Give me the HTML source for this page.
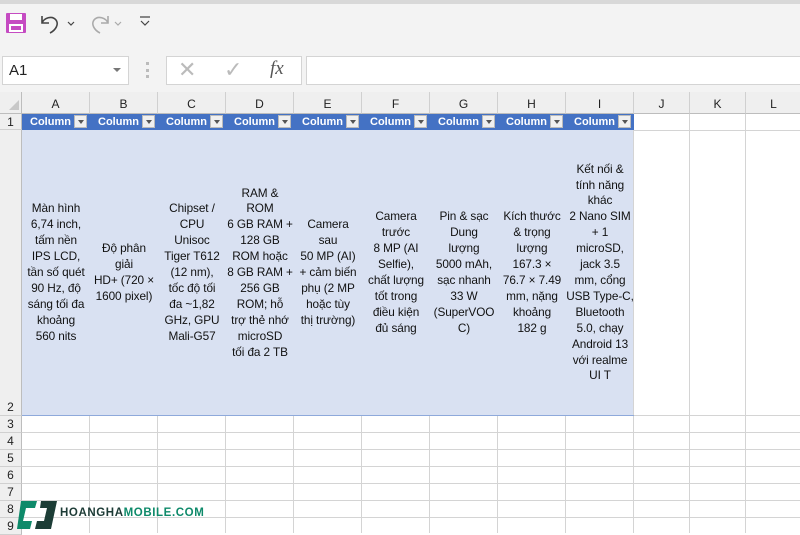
<!DOCTYPE html>
<html><head><meta charset="utf-8"><style>
*{margin:0;padding:0;box-sizing:border-box}
body{width:800px;height:533px;overflow:hidden;background:#fff;font-family:"Liberation Sans",sans-serif;position:relative}
.a{position:absolute}
.top{left:0;top:0;width:800px;height:48px;background:#f3f3f3;border-top:4px solid #d8d8d8}
.fb{left:0;top:48px;width:800px;height:44px;background:#f3f3f3}
.box{background:#fff;border:1px solid #d4d4d4}
.ch{top:92px;height:22px;background:#efefef;border-right:1px solid #d0d0d0;border-bottom:1px solid #bdbdbd;font-size:12px;color:#222;text-align:center;line-height:24px}
.rh{left:0;width:22px;background:#efefef;border-bottom:1px solid #d0d0d0;border-right:1px solid #bdbdbd;font-size:12px;color:#222;text-align:center}
.vl{top:114px;width:1px;height:419px;background:#d4d4d4}
.hl{left:22px;width:778px;height:1px;background:#d4d4d4}
.hd{top:114px;height:16px;background:#4472c4;color:#fff;font-weight:bold;font-size:11px;line-height:16px;padding-left:8px;overflow:hidden;white-space:nowrap}
.dd{top:115px;width:13px;height:13px;background:#f0f0f0;border:1px solid #bbb}
.dd:after{content:"";position:absolute;left:3px;top:4px;border:3px solid transparent;border-top:4px solid #555}
.c{top:130px;height:286px;display:flex;align-items:center;justify-content:center;text-align:center;font-size:11.8px;line-height:15.9px;color:#111;padding:0 1px;white-space:nowrap;letter-spacing:-0.1px}
</style></head><body>
<div class="a top"></div>
<div class="a fb"></div>
<svg class="a" style="left:5px;top:12px" width="22" height="22" viewBox="0 0 22 22"><rect x="1" y="1" width="20" height="20" rx="1" fill="#c54bc2"/><rect x="5" y="2" width="12" height="6" fill="#fff"/><rect x="4" y="12" width="14" height="8" fill="#fff"/><rect x="6" y="14" width="10" height="4" fill="#c54bc2"/></svg>
<svg class="a" style="left:38px;top:12px" width="40" height="24" viewBox="0 0 40 24"><path d="M4 4v7h7M4 11c2-5 10-8 14-3 3 4 0 10-6 13" fill="none" stroke="#444" stroke-width="1.6"/><path d="M30 10l3 3 3-3" fill="none" stroke="#444" stroke-width="1.2"/></svg>
<svg class="a" style="left:86px;top:12px" width="40" height="24" viewBox="0 0 40 24"><path d="M22 4v7h-7M22 11c-2-5-10-8-14-3-3 4 0 10 6 13" fill="none" stroke="#aaa" stroke-width="1.6"/><path d="M29 10l3 3 3-3" fill="none" stroke="#aaa" stroke-width="1.2"/></svg>
<svg class="a" style="left:139px;top:15px" width="12" height="14" viewBox="0 0 12 14"><path d="M1 2h10M2 6l4 4 4-4" fill="none" stroke="#444" stroke-width="1.2"/></svg>
<div class="a box" style="left:2px;top:56px;width:127px;height:29px;font-size:15px;line-height:27px;padding-left:6px;color:#222">A1</div>
<div class="a" style="left:113px;top:68px;border:4px solid transparent;border-top:4px solid #777"></div>
<div class="a" style="left:146px;top:62px;width:3px;height:16px;border-left:3px dotted #bbb"></div>
<div class="a box" style="left:166px;top:56px;width:136px;height:29px"></div>
<div class="a" style="left:178px;top:57px;font-size:22px;color:#bbb">✕</div>
<div class="a" style="left:224px;top:57px;font-size:22px;color:#bbb">✓</div>
<div class="a" style="left:270px;top:58px;font-size:19px;font-style:italic;font-family:'Liberation Serif',serif;color:#555">fx</div>
<div class="a box" style="left:306px;top:56px;width:500px;height:29px"></div>
<div class="a ch" style="left:0;width:22px;border-right:1px solid #bdbdbd"></div>
<div class="a" style="left:9px;top:100px;border-left:10px solid transparent;border-bottom:10px solid #c8c8c8"></div>
<div class="a ch" style="left:22px;width:68px">A</div>
<div class="a ch" style="left:90px;width:68px">B</div>
<div class="a ch" style="left:158px;width:68px">C</div>
<div class="a ch" style="left:226px;width:68px">D</div>
<div class="a ch" style="left:294px;width:68px">E</div>
<div class="a ch" style="left:362px;width:68px">F</div>
<div class="a ch" style="left:430px;width:68px">G</div>
<div class="a ch" style="left:498px;width:68px">H</div>
<div class="a ch" style="left:566px;width:68px">I</div>
<div class="a ch" style="left:634px;width:56px">J</div>
<div class="a ch" style="left:690px;width:56px">K</div>
<div class="a ch" style="left:746px;width:56px">L</div>
<div class="a" style="left:22px;top:130px;width:612px;height:286px;background:#d9e1f2"></div>
<div class="a vl" style="left:633px"></div><div class="a vl" style="left:689px"></div><div class="a vl" style="left:745px"></div>
<div class="a vl" style="left:89px;top:416px;height:117px"></div><div class="a vl" style="left:157px;top:416px;height:117px"></div><div class="a vl" style="left:225px;top:416px;height:117px"></div><div class="a vl" style="left:293px;top:416px;height:117px"></div><div class="a vl" style="left:361px;top:416px;height:117px"></div><div class="a vl" style="left:429px;top:416px;height:117px"></div><div class="a vl" style="left:497px;top:416px;height:117px"></div><div class="a vl" style="left:565px;top:416px;height:117px"></div>
<div class="a hl" style="top:130px;left:634px;width:166px"></div>
<div class="a hl" style="top:415px;background:#8ea9db;width:612px"></div>
<div class="a hl" style="top:415px;left:634px;width:166px"></div>
<div class="a hl" style="top:432px"></div><div class="a hl" style="top:449px"></div><div class="a hl" style="top:466px"></div><div class="a hl" style="top:483px"></div><div class="a hl" style="top:500px"></div><div class="a hl" style="top:517px"></div>
<div class="a rh" style="top:114px;height:16px;line-height:16px">1</div>
<div class="a rh" style="top:130px;height:286px;padding-top:270px;line-height:14px">2</div>
<div class="a rh" style="top:416px;height:17px;line-height:17px">3</div>
<div class="a rh" style="top:433px;height:17px;line-height:17px">4</div>
<div class="a rh" style="top:450px;height:17px;line-height:17px">5</div>
<div class="a rh" style="top:467px;height:17px;line-height:17px">6</div>
<div class="a rh" style="top:484px;height:17px;line-height:17px">7</div>
<div class="a rh" style="top:501px;height:17px;line-height:17px">8</div>
<div class="a rh" style="top:518px;height:17px;line-height:17px">9</div>
<div class="a hd" style="left:22px;width:68px">Column</div><div class="a dd" style="left:74px"></div>
<div class="a hd" style="left:90px;width:68px">Column</div><div class="a dd" style="left:142px"></div>
<div class="a hd" style="left:158px;width:68px">Column</div><div class="a dd" style="left:210px"></div>
<div class="a hd" style="left:226px;width:68px">Column</div><div class="a dd" style="left:278px"></div>
<div class="a hd" style="left:294px;width:68px">Column</div><div class="a dd" style="left:346px"></div>
<div class="a hd" style="left:362px;width:68px">Column</div><div class="a dd" style="left:414px"></div>
<div class="a hd" style="left:430px;width:68px">Column</div><div class="a dd" style="left:482px"></div>
<div class="a hd" style="left:498px;width:68px">Column</div><div class="a dd" style="left:550px"></div>
<div class="a hd" style="left:566px;width:68px">Column</div><div class="a dd" style="left:618px"></div>
<div class="a c" style="left:22px;width:68px">Màn hình<br>6,74 inch,<br>tấm nền<br>IPS LCD,<br>tần số quét<br>90 Hz, độ<br>sáng tối đa<br>khoảng<br>560 nits</div>
<div class="a c" style="left:90px;width:68px">Độ phân<br>giải<br>HD+ (720 ×<br>1600 pixel)</div>
<div class="a c" style="left:158px;width:68px">Chipset /<br>CPU<br>Unisoc<br>Tiger T612<br>(12 nm),<br>tốc độ tối<br>đa ~1,82<br>GHz, GPU<br>Mali-G57</div>
<div class="a c" style="left:226px;width:68px">RAM &amp;<br>ROM<br>6 GB RAM +<br>128 GB<br>ROM hoặc<br>8 GB RAM +<br>256 GB<br>ROM; hỗ<br>trợ thẻ nhớ<br>microSD<br>tối đa 2 TB</div>
<div class="a c" style="left:294px;width:68px">Camera<br>sau<br>50 MP (AI)<br>+ cảm biến<br>phụ (2 MP<br>hoặc tùy<br>thị trường)</div>
<div class="a c" style="left:362px;width:68px">Camera<br>trước<br>8 MP (AI<br>Selfie),<br>chất lượng<br>tốt trong<br>điều kiện<br>đủ sáng</div>
<div class="a c" style="left:430px;width:68px">Pin &amp; sạc<br>Dung<br>lượng<br>5000 mAh,<br>sạc nhanh<br>33 W<br>(SuperVOO<br>C)</div>
<div class="a c" style="left:498px;width:68px">Kích thước<br>&amp; trọng<br>lượng<br>167.3 ×<br>76.7 × 7.49<br>mm, nặng<br>khoảng<br>182 g</div>
<div class="a c" style="left:566px;width:68px">Kết nối &amp;<br>tính năng<br>khác<br>2 Nano SIM<br>+ 1<br>microSD,<br>jack 3.5<br>mm, cổng<br>USB Type-C,<br>Bluetooth<br>5.0, chạy<br>Android 13<br>với realme<br>UI T</div>
<svg class="a" style="left:15px;top:499px" width="44" height="32" viewBox="0 0 44 32"><path d="M6 2h16l-2 7h-9l-3 13h9l-2 8H2z" fill="#0e8a6a"/><path d="M26 2h16l-6 28H20l2-8h7l3-13h-7z" fill="#1c3d36"/></svg>
<div class="a" style="left:60px;top:507px;font-size:11.5px;font-weight:bold;letter-spacing:0.6px;color:#1d3b36">HOANGHA<span style="color:#0e8a6a">MOBILE.COM</span></div>
</body></html>
